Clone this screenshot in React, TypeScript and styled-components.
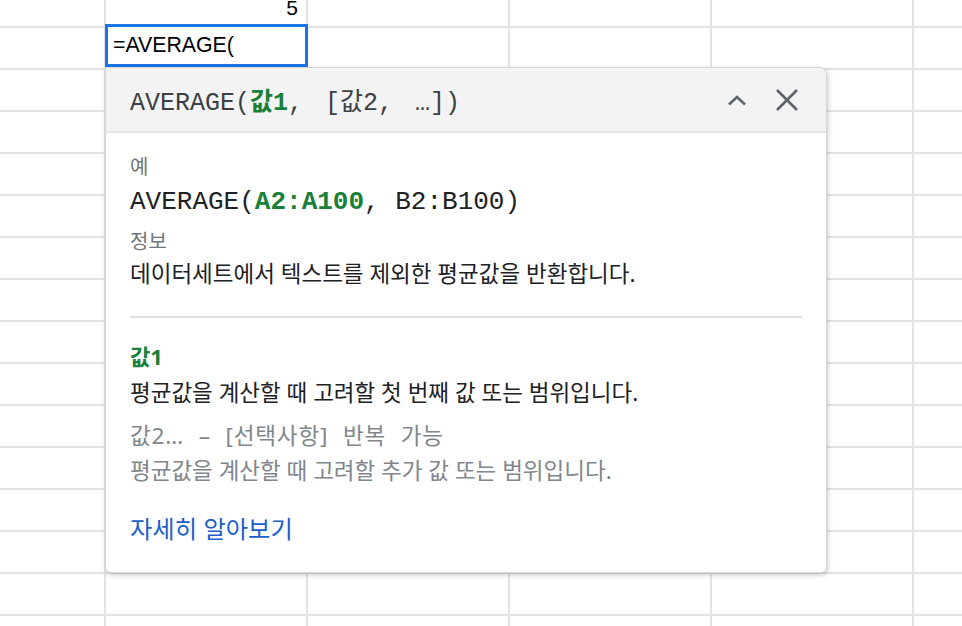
import React from "react";
import styled, { createGlobalStyle } from "styled-components";

const GlobalStyle = createGlobalStyle`
  html, body { margin: 0; padding: 0; background: #ffffff; }
  body { overflow: hidden; }
`;

const KR = `"Noto Sans", "Noto Sans CJK KR", sans-serif`;
const MONO = `"Liberation Mono", "Noto Sans CJK KR", monospace`;

const Sheet = styled.div`
  position: relative;
  width: 962px;
  height: 626px;
  overflow: hidden;
  background: #ffffff;
`;

const Grid = styled.div`
  display: grid;
  grid-template-columns: repeat(6, 202px);
  grid-auto-rows: 42px;
  margin-left: -96px;
  margin-top: -14px;
`;

const Cell = styled.div<{ $right?: boolean }>`
  box-sizing: border-box;
  border-right: 2px solid #e2e2e2;
  border-bottom: 2px solid #e2e2e2;
  display: flex;
  align-items: center;
  justify-content: ${(p) => (p.$right ? "flex-end" : "flex-start")};
  padding: 4px 8px 0 8px;
  font-family: "Liberation Sans", Arial, sans-serif;
  font-size: 21px;
  color: #000;
`;

const Editor = styled.div`
  position: absolute;
  left: 105px;
  top: 24px;
  width: 203px;
  height: 43px;
  box-sizing: border-box;
  border: 3px solid #1a73e8;
  background: #ffffff;
  display: flex;
  align-items: center;
  padding-left: 5px;
  font-family: "Liberation Sans", Arial, sans-serif;
  font-size: 21.3px;
  color: #000;
`;

const Popup = styled.div`
  position: absolute;
  left: 105px;
  top: 67px;
  width: 722px;
  height: 506px;
  box-sizing: border-box;
  border: 1px solid #d6d6d6;
  border-radius: 0 8px 6px 6px;
  background: #ffffff;
  box-shadow: 1px 2px 5px rgba(60, 64, 67, 0.28);
  display: flex;
  flex-direction: column;
  overflow: hidden;
`;

const Header = styled.div`
  height: 65px;
  flex: none;
  box-sizing: border-box;
  background: #f3f3f3;
  border-bottom: 2px solid #e4e4e4;
  display: flex;
  align-items: center;
  justify-content: space-between;
  padding: 0 27px 0 24px;
`;

const Signature = styled.div`
  font-family: ${MONO};
  font-size: 25px;
  color: #3c4043;
  white-space: pre;
  word-spacing: 7px;
`;

const Code = styled.div<{ $mt?: number }>`
  margin-top: ${(p) => p.$mt ?? 0}px;
  font-family: ${MONO};
  font-size: 26px;
  color: #202124;
  white-space: pre;
  line-height: 36px;
`;

const Green = styled.span`
  color: #188038;
  font-weight: 700;
`;

const Icons = styled.div`
  display: flex;
  align-items: center;
  gap: 28px;
`;

const IconButton = styled.span`
  display: flex;
  align-items: center;
  justify-content: center;
  color: #5f6368;
`;

const Body = styled.div`
  display: flex;
  flex-direction: column;
  padding: 20px 24px 0 24px;
`;

const Label = styled.div<{ $mt?: number }>`
  margin-top: ${(p) => p.$mt ?? 0}px;
  font-family: ${KR};
  font-size: 20px;
  line-height: 28px;
  color: #70757a;
`;

const Text = styled.div<{ $muted?: boolean; $mt?: number }>`
  margin-top: ${(p) => p.$mt ?? 0}px;
  font-family: ${KR};
  font-size: 22.5px;
  line-height: 35px;
  color: ${(p) => (p.$muted ? "#80868b" : "#202124")};
  white-space: nowrap;
`;

const ParamName = styled.div<{ $muted?: boolean; $mt?: number }>`
  margin-top: ${(p) => p.$mt ?? 0}px;
  font-family: ${KR};
  font-size: ${(p) => (p.$muted ? 22.6 : 22)}px;
  line-height: 35px;
  font-weight: ${(p) => (p.$muted ? 400 : 700)};
  color: ${(p) => (p.$muted ? "#80868b" : "#188038")};
  white-space: pre;
  letter-spacing: ${(p) => (p.$muted ? 0.8 : 0)}px;
  word-spacing: 8px;
`;

const Divider = styled.hr`
  border: none;
  border-top: 2px solid #e0e0e0;
  margin: 25px 0 21px 0;
`;

const Link = styled.a<{ $mt?: number }>`
  margin-top: ${(p) => p.$mt ?? 0}px;
  font-family: ${KR};
  font-size: 24.3px;
  line-height: 35px;
  color: #1a5fcc;
  text-decoration: none;
  align-self: flex-start;
`;

const cols = 6;
const rows = 16;

export default function App() {
  const cells: React.ReactNode[] = [];
  for (let r = 0; r < rows; r++) {
    for (let c = 0; c < cols; c++) {
      const isFive = r === 0 && c === 1;
      cells.push(
        <Cell key={`${r}-${c}`} $right={isFive}>
          {isFive ? "5" : null}
        </Cell>
      );
    }
  }
  return (
    <>
      <GlobalStyle />
      <Sheet>
        <Grid>{cells}</Grid>
        <Editor>=AVERAGE(</Editor>
        <Popup>
          <Header>
            <Signature>
              AVERAGE(<Green>값1</Green>, [값2, …])
            </Signature>
            <Icons>
              <IconButton>
                <svg width="20" height="12" viewBox="0 0 20 12">
                  <polyline
                    points="2,10.5 10,3 18,10.5"
                    fill="none"
                    stroke="currentColor"
                    strokeWidth="2.6"
                  />
                </svg>
              </IconButton>
              <IconButton>
                <svg width="24" height="24" viewBox="0 0 24 24">
                  <path
                    d="M2 2 L22 22 M22 2 L2 22"
                    fill="none"
                    stroke="currentColor"
                    strokeWidth="2.6"
                  />
                </svg>
              </IconButton>
            </Icons>
          </Header>
          <Body>
            <Label>예</Label>
            <Code $mt={3}>
              AVERAGE(<Green>A2:A100</Green>, B2:B100)
            </Code>
            <Label $mt={8}>정보</Label>
            <Text>데이터세트에서 텍스트를 제외한 평균값을 반환합니다.</Text>
            <Divider />
            <ParamName>값1</ParamName>
            <Text $mt={1}>평균값을 계산할 때 고려할 첫 번째 값 또는 범위입니다.</Text>
            <ParamName $muted $mt={8}>
              값2… – [선택사항] 반복 가능
            </ParamName>
            <Text $muted>평균값을 계산할 때 고려할 추가 값 또는 범위입니다.</Text>
            <Link href="#" $mt={23}>
              자세히 알아보기
            </Link>
          </Body>
        </Popup>
      </Sheet>
    </>
  );
}
